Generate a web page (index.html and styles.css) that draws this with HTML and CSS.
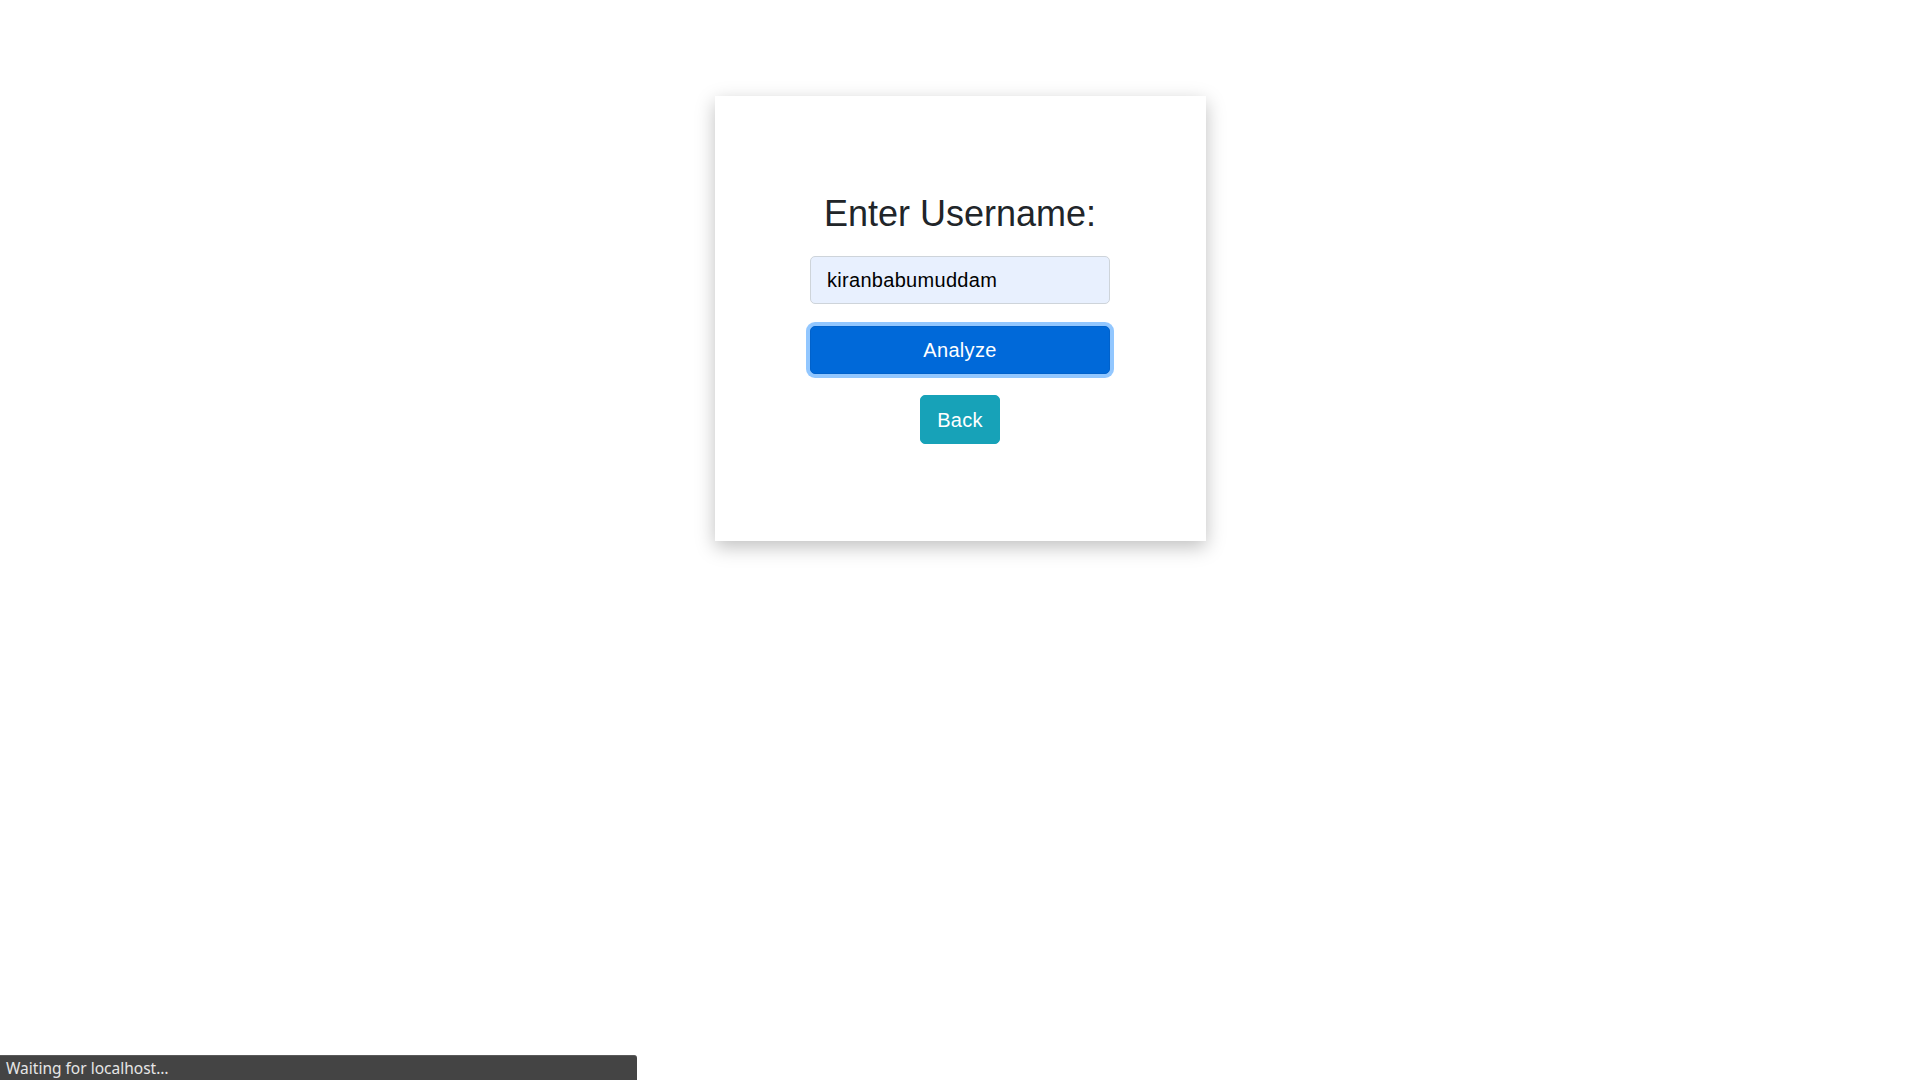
FILE: index.html
```html
<!DOCTYPE html>
<html lang="en">
<head>
<meta charset="utf-8">
<title>Analyze</title>
<link rel="stylesheet" href="styles.css">
</head>
<body>
<div class="page">
  <div class="card">
    <h2 class="title">Enter Username:</h2>
    <input class="field" type="text" value="kiranbabumuddam">
    <button class="btn btn-primary" type="button">Analyze</button>
    <button class="btn btn-info" type="button">Back</button>
  </div>
</div>
<div class="status">Waiting for localhost…</div>
</body>
</html>
```
FILE: styles.css
```css
html, body {
  margin: 0;
  padding: 0;
  background: #ffffff;
  font-family: "Liberation Sans", Arial, sans-serif;
  color: #212529;
}

body {
  min-height: 100vh;
}

.page {
  display: flex;
  justify-content: center;
  align-items: flex-start;
  padding: 96px 0 40px;
}

.card {
  width: 491px;
  box-sizing: border-box;
  padding: 96px 0 97px;
  background: #ffffff;
  box-shadow: 0 6px 18px rgba(0, 0, 0, 0.25);
  display: flex;
  flex-direction: column;
  align-items: center;
}

.title {
  margin: 0 0 21px;
  font-size: 36px;
  font-weight: 400;
  line-height: 43px;
  color: #212529;
}

.field {
  width: 300px;
  height: 48px;
  box-sizing: border-box;
  padding: 8px 16px;
  margin: 0 0 22px;
  font-family: "Liberation Sans", Arial, sans-serif;
  font-size: 20px;
  letter-spacing: 0.3px;
  line-height: 30px;
  color: #000000;
  background: #e8f0fe;
  border: 1px solid #ced4da;
  border-radius: 5px;
  outline: none;
}

.btn {
  box-sizing: border-box;
  height: 48px;
  padding: 8px 16px;
  font-family: "Liberation Sans", Arial, sans-serif;
  font-size: 20px;
  letter-spacing: 0.3px;
  line-height: 30px;
  color: #ffffff;
  border: 1px solid transparent;
  border-radius: 5px;
  cursor: pointer;
}

.btn-primary {
  width: 300px;
  background: #0069d9;
  border-color: #0062cc;
  box-shadow: 0 0 0 4px rgba(38, 143, 255, 0.5);
  margin-bottom: 21px;
}

.btn-info {
  height: 49px;
  background: #17a2b8;
  border-color: #17a2b8;
}

.status {
  position: fixed;
  left: 0;
  bottom: 0;
  width: 637px;
  height: 25px;
  box-sizing: border-box;
  padding: 0 6px;
  background: #444444;
  border-top: 1px solid #5a5a5a;
  border-top-right-radius: 3px;
  color: #e6e6e6;
  font-family: "Noto Sans", "DejaVu Sans", sans-serif;
  font-size: 15.5px;
  line-height: 24px;
  white-space: nowrap;
}
```
